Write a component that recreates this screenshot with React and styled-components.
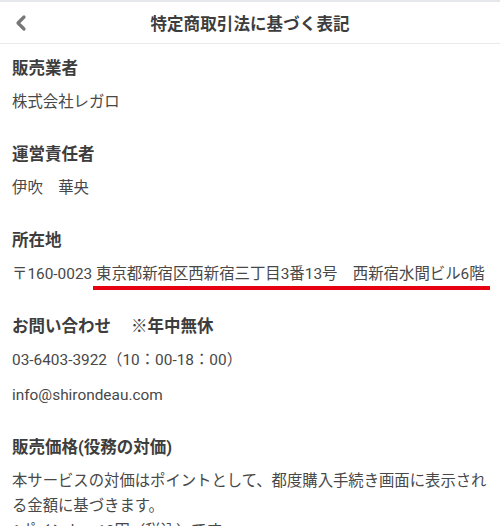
import styled, { createGlobalStyle } from 'styled-components'

const GlobalStyle = createGlobalStyle`
    html, body {
        margin: 0;
        padding: 0;
        background: #fff;
    }
    body {
        font-family: Roboto, "Noto Sans CJK JP", sans-serif;
        color: #444;
    }
`

const Page = styled.div`
    width: 500px;
    min-height: 526px;
    border-top: 2px solid #e6e7ea;
    box-sizing: border-box;
    overflow: hidden;
`

const Header = styled.header`
    position: relative;
    height: 41px;
    display: flex;
    align-items: center;
    justify-content: center;
    border-bottom: 1px solid #e9e9e9;
`

const BackButton = styled.button`
    position: absolute;
    left: 10px;
    top: 50%;
    transform: translateY(-50%);
    background: none;
    border: 0;
    padding: 4px;
    display: flex;
    cursor: pointer;
`

const Title = styled.h1`
    margin: 0;
    font-size: 16.5px;
    font-weight: 700;
    color: #3d3d3d;
    letter-spacing: 0.1px;
`

const Content = styled.main`
    padding: 12px 12px 0 12px;
`

const Section = styled.section`
    margin-bottom: 27px;
`

const Heading = styled.h2`
    margin: 0 0 8px;
    font-size: 16.5px;
    line-height: 26px;
    font-weight: 700;
    color: #3d3d3d;
`

const Line = styled.p`
    margin: 0 0 10px;
    font-size: 15.4px;
    line-height: 25px;
    color: #484848;
    white-space: nowrap;

    &:last-child {
        margin-bottom: 0;
    }
`

const Body = styled.p`
    margin: 0;
    font-size: 15.35px;
    line-height: 25px;
    color: #484848;
`

const Marked = styled.span`
    position: relative;

    &::after {
        content: '';
        position: absolute;
        left: -3px;
        right: -5px;
        bottom: -7px;
        height: 4px;
        background: #e60012;
    }
`

const Note = styled.span`
    margin-left: 20px;
`

const Chevron = () => (
    <svg width="14" height="17" viewBox="0 0 14 17">
        <path d="M10 2.5 L4 8.5 L10 14.5" fill="none" stroke="#777" strokeWidth="3.2" strokeLinecap="round" strokeLinejoin="round" />
    </svg>
)

const App = () => {
    return (
        <Page>
            <GlobalStyle />
            <Header>
                <BackButton aria-label="戻る">
                    <Chevron />
                </BackButton>
                <Title>特定商取引法に基づく表記</Title>
            </Header>
            <Content>
                <Section>
                    <Heading>販売業者</Heading>
                    <Line>株式会社レガロ</Line>
                </Section>
                <Section>
                    <Heading>運営責任者</Heading>
                    <Line>伊吹　華央</Line>
                </Section>
                <Section>
                    <Heading>所在地</Heading>
                    <Line>〒160-0023 <Marked>東京都新宿区西新宿三丁目3番13号　西新宿水間ビル6階</Marked></Line>
                </Section>
                <Section>
                    <Heading>お問い合わせ<Note>※年中無休</Note></Heading>
                    <Line>03-6403-3922（10：00-18：00）</Line>
                    <Line>info@shirondeau.com</Line>
                </Section>
                <Section>
                    <Heading>販売価格(役務の対価)</Heading>
                    <Body>
                        本サービスの対価はポイントとして、都度購入手続き画面に表示される金額に基づきます。
                        <br />
                        1ポイント＝10円（税込）です。
                    </Body>
                </Section>
            </Content>
        </Page>
    )
}

export default App
